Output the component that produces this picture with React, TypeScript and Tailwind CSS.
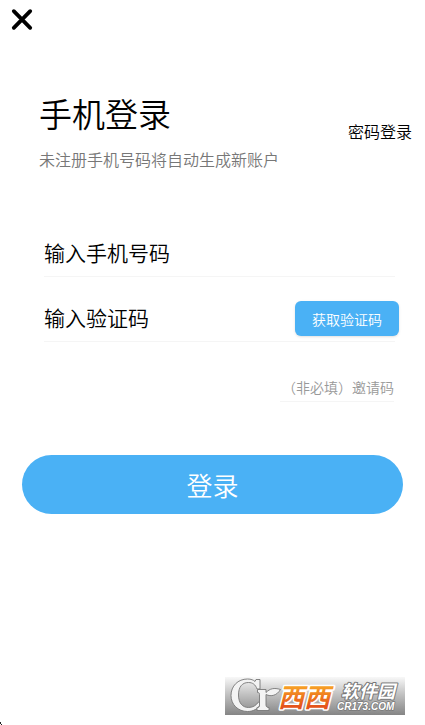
import { useState } from 'react';

function CloseIcon() {
  return (
    <svg width="24" height="24" viewBox="0 0 24 24" fill="none" stroke="#000" strokeWidth="3.8" strokeLinecap="round">
      <path d="M3.8 3.2 L20.2 19.8 M20.2 3.2 L3.8 19.8" />
    </svg>
  );
}

function SiteBadge() {
  return (
    <svg width="180" height="38" viewBox="0 0 180 38" role="img" aria-label="西西软件园 CR173.COM">
      <defs>
        <linearGradient id="badge-bg" x1="0" y1="0" x2="0" y2="1">
          <stop offset="0" stopColor="#f8f8f8" />
          <stop offset="0.45" stopColor="#c2c2c2" />
          <stop offset="1" stopColor="#858585" />
        </linearGradient>
        <linearGradient id="badge-orange" x1="0" y1="0" x2="0" y2="1">
          <stop offset="0.2" stopColor="#f9a826" />
          <stop offset="0.8" stopColor="#e4521b" />
        </linearGradient>
      </defs>
      <rect width="180" height="38" fill="url(#badge-bg)" />

      {/* C dan r dengan daun */}
      <g stroke="#777" strokeWidth="0.9" fill="#f3f3f3" strokeLinejoin="round">
        <path d="M31 2.5 L35 2.5 L35 12 L32 12 C30.5 7.5 27.5 5.5 23.5 5.5 C17 5.5 13.5 10 13.5 18 C13.5 26 17.5 30.5 23.5 30.5 C28 30.5 31 28.5 33.5 25 L36 27 C32.5 32 28.5 34.5 22.5 34.5 C13 34.5 6 27.5 6 18.5 C6 9 13 2 22.5 2 C26 2 28.5 3 30 4.5 Z" />
        <path d="M32.5 12.5 L41 12.5 L41 15.5 C45 11.5 49 10.5 55.5 12.5 C52 18.5 46 20 41 17.5 L41 28 C41 30 42.5 30.5 44 30.5 L44 33.5 L32 33.5 L32 30.5 C34 30.5 34.5 30 34.5 28 L34.5 17.5 C34.5 16 34 15.5 32.5 15.5 Z" />
      </g>

      <text
        x="53"
        y="30"
        fontSize="26"
        fontWeight="700"
        fontStyle="italic"
        fill="url(#badge-orange)"
        stroke="#fff"
        strokeWidth="3"
        strokeLinejoin="round"
        paintOrder="stroke"
        fontFamily="'Noto Sans CJK SC', sans-serif"
      >
        西西
      </text>
      <text
        x="116"
        y="21"
        fontSize="18"
        fontWeight="700"
        fontStyle="italic"
        fill="#fff"
        stroke="#777"
        strokeWidth="2"
        strokeLinejoin="round"
        paintOrder="stroke"
        fontFamily="'Noto Sans CJK SC', sans-serif"
      >
        软件园
      </text>
      <text
        x="112"
        y="33"
        fontSize="10"
        fontWeight="700"
        fontStyle="italic"
        fill="#fff"
        stroke="#777"
        strokeWidth="1.5"
        strokeLinejoin="round"
        paintOrder="stroke"
        fontFamily="'Liberation Sans', sans-serif"
      >
        CR173.COM
      </text>
    </svg>
  );
}

export default function App() {
  const [phone, setPhone] = useState('');
  const [code, setCode] = useState('');
  const [invite, setInvite] = useState('');

  return (
    <main className="relative flex min-h-screen flex-col bg-white font-['Noto_Sans_CJK_SC',sans-serif] font-[350] text-black">
      <header className="flex h-10 items-center px-2.5">
        <button type="button" aria-label="关闭">
          <CloseIcon />
        </button>
      </header>

      {/* Judul + pindah ke login kata sandi */}
      <div className="mt-[45px] flex items-center justify-between pr-[13px] pl-[39px]">
        <div>
          <h1 className="text-[33px] leading-[56px] font-[350]">手机登录</h1>
          <p className="text-base leading-9 text-[#777]">未注册手机号码将自动生成新账户</p>
        </div>
        <a href="#password" className="text-base">
          密码登录
        </a>
      </div>

      <form className="mt-[35px] flex flex-col" onSubmit={(e) => e.preventDefault()}>
        <div className="mr-[30px] ml-11 flex h-[65px] items-end border-b border-[#f5f5f5]">
          <input
            type="tel"
            aria-label="输入手机号码"
            placeholder="输入手机号码"
            value={phone}
            onChange={(e) => setPhone(e.target.value)}
            className="h-12 w-full min-w-0 text-[21px] outline-none placeholder:text-black"
          />
        </div>

        <div className="mr-[30px] ml-11 flex h-[65px] items-end border-b border-[#f5f5f5]">
          <input
            type="text"
            aria-label="输入验证码"
            placeholder="输入验证码"
            value={code}
            onChange={(e) => setCode(e.target.value)}
            className="h-12 min-w-0 flex-1 text-[21px] outline-none placeholder:text-black"
          />
          <button
            type="button"
            className="-mr-1 mb-[5px] h-[35px] w-[104px] shrink-0 rounded-md bg-[#4ab1f5] text-sm text-white shadow-sm"
          >
            获取验证码
          </button>
        </div>

        <input
          type="text"
          aria-label="邀请码"
          placeholder="（非必填）邀请码"
          value={invite}
          onChange={(e) => setInvite(e.target.value)}
          className="mt-[30px] mr-[31px] h-[30px] w-[114px] self-end border-b border-[#f5f5f5] text-right text-sm outline-none placeholder:text-[#999]"
        />

        <button type="submit" className="mx-[22px] mt-[53px] h-[59px] rounded-full bg-[#4ab1f5] text-[26px] text-white">
          登录
        </button>
      </form>

      <footer className="mt-auto flex justify-end pr-5 pb-2.5">
        <SiteBadge />
      </footer>

      <svg className="absolute bottom-0 left-0" width="2" height="3" viewBox="0 0 2 3" aria-hidden="true">
        <path d="M0 0h1v2H0zM1 2h1v1H1z" fill="#222" />
      </svg>
    </main>
  );
}
